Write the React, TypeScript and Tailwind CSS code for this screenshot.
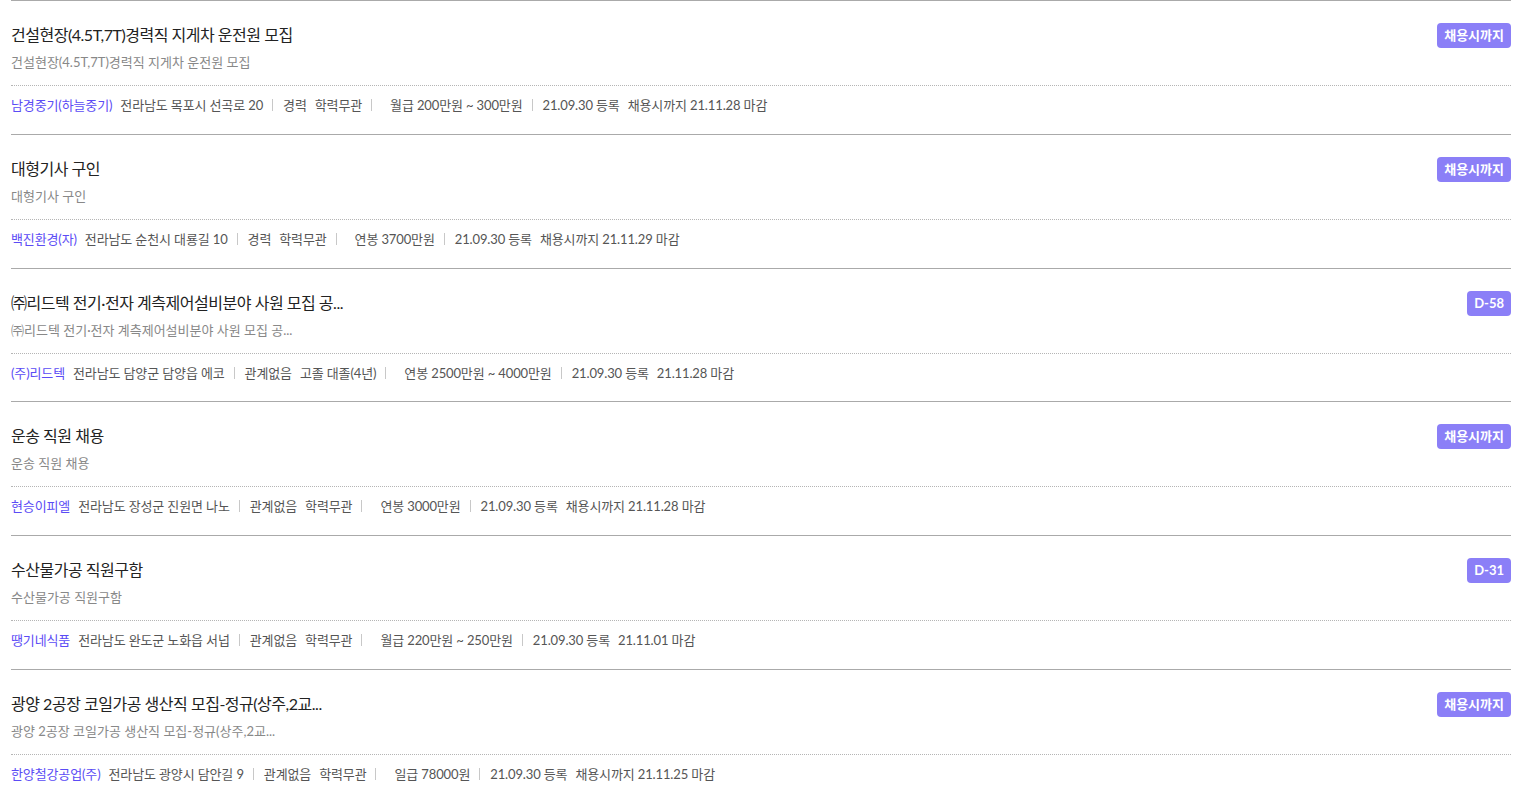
const jobs = [
  {
    title: "건설현장(4.5T,7T)경력직 지게차 운전원 모집",
    company: "남경중기(하늘중기)",
    address: "전라남도 목포시 선곡로 20",
    career: "경력",
    edu: "학력무관",
    pay: "월급 200만원 ~ 300만원",
    reg: "21.09.30 등록",
    end: "채용시까지 21.11.28 마감",
    badge: "채용시까지",
  },
  {
    title: "대형기사 구인",
    company: "백진환경(자)",
    address: "전라남도 순천시 대룡길 10",
    career: "경력",
    edu: "학력무관",
    pay: "연봉 3700만원",
    reg: "21.09.30 등록",
    end: "채용시까지 21.11.29 마감",
    badge: "채용시까지",
  },
  {
    title: "㈜리드텍 전기·전자 계측제어설비분야 사원 모집 공...",
    company: "(주)리드텍",
    address: "전라남도 담양군 담양읍 에코",
    career: "관계없음",
    edu: "고졸 대졸(4년)",
    pay: "연봉 2500만원 ~ 4000만원",
    reg: "21.09.30 등록",
    end: "21.11.28 마감",
    badge: "D-58",
  },
  {
    title: "운송 직원 채용",
    company: "현승이피엘",
    address: "전라남도 장성군 진원면 나노",
    career: "관계없음",
    edu: "학력무관",
    pay: "연봉 3000만원",
    reg: "21.09.30 등록",
    end: "채용시까지 21.11.28 마감",
    badge: "채용시까지",
  },
  {
    title: "수산물가공 직원구함",
    company: "땡기네식품",
    address: "전라남도 완도군 노화읍 서넙",
    career: "관계없음",
    edu: "학력무관",
    pay: "월급 220만원 ~ 250만원",
    reg: "21.09.30 등록",
    end: "21.11.01 마감",
    badge: "D-31",
  },
  {
    title: "광양 2공장 코일가공 생산직 모집-정규(상주,2교...",
    company: "한양철강공업(주)",
    address: "전라남도 광양시 담안길 9",
    career: "관계없음",
    edu: "학력무관",
    pay: "일급 78000원",
    reg: "21.09.30 등록",
    end: "채용시까지 21.11.25 마감",
    badge: "채용시까지",
  },
];

function Sep() {
  return <span className="ml-[9px] mr-[10px] inline-block h-[12px] w-px bg-[#c8c8c8]" />;
}

export default function App() {
  return (
    <div className="min-h-[800px] bg-white font-['Lato','Noto_Sans_CJK_KR',sans-serif]">
      <ul className="ml-[11px] w-[1500px]">
        {jobs.map((job, i) => (
          <li key={i} className="border-t border-[#aaaaaa] pt-[22px] pb-[18.8px]">
            <div className="flex items-start justify-between">
              <h3 className="text-[16px] leading-[24px] tracking-[-0.03em] text-[#222]">{job.title}</h3>
              <span className="mb-[-1px] rounded-[4px] bg-[#8b7ff7] px-[7px] text-[13px] font-bold leading-[25px] text-white">
                {job.badge}
              </span>
            </div>
            <p className="mt-[5px] text-[13px] leading-[20px] text-[#888]">{job.title}</p>
            <div className="mt-[13px] border-t border-dotted border-[#b5b5b5]" />
            <div className="mt-[9px] flex items-center whitespace-pre text-[13px] leading-[20px] tracking-[-0.01em] text-[#555]">
              <span className="mr-[8px] text-[#5b4cf5]">{job.company}</span>
              <span>{job.address}</span>
              <Sep />
              <span>{job.career}</span>
              <span className="ml-[8px]">{job.edu}</span>
              <Sep />
              <span className="ml-[8px]">{job.pay}</span>
              <Sep />
              <span>{job.reg}</span>
              <span className="ml-[8px]">{job.end}</span>
            </div>
          </li>
        ))}
      </ul>
    </div>
  );
}
